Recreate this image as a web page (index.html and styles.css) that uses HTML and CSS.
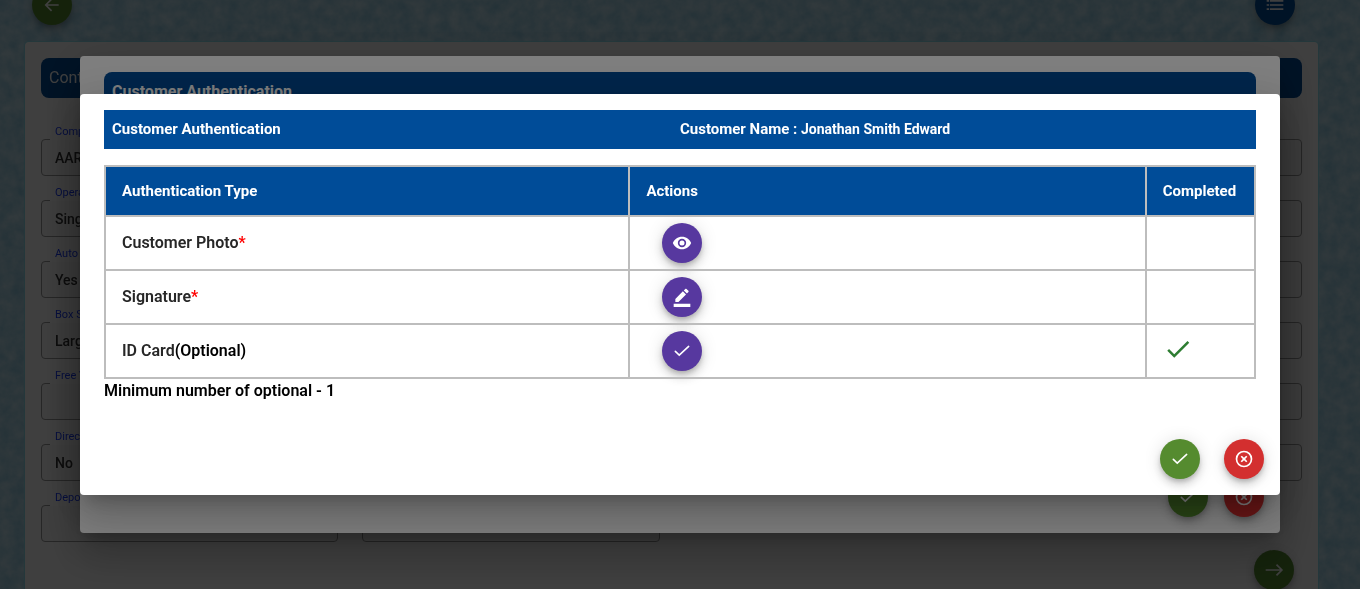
FILE: index.html
```
<!DOCTYPE html>
<html lang="en">
<head>
<meta charset="utf-8">
<title>Customer Authentication</title>
<link rel="stylesheet" href="styles.css">
</head>
<body>
<svg class="symbols" aria-hidden="true">
  <symbol id="check" viewBox="0 0 24 24"><path d="M4 12.500 8.700 17 20 6.500" fill="none" stroke="currentColor" stroke-width="1.900" stroke-linecap="round"/></symbol>
  <symbol id="done" viewBox="0 0 24 24"><path d="M9 16.17 4.83 12l-1.42 1.41L9 19 21 7l-1.41-1.41z" fill="currentColor"/></symbol>
  <symbol id="close" viewBox="0 0 24 24"><path d="M14.59 8 12 10.59 9.41 8 8 9.41 10.59 12 8 14.59 9.41 16 12 13.41 14.59 16 16 14.59 13.41 12 16 9.41zM12 2a10 10 0 1 0 0 20 10 10 0 0 0 0-20zm0 18a8 8 0 1 1 0-16 8 8 0 0 1 0 16z" fill="currentColor"/></symbol>
  <symbol id="eye" viewBox="0 0 24 24"><path d="M12 4.5C7 4.5 2.73 7.61 1 12c1.73 4.39 6 7.5 11 7.5s9.27-3.11 11-7.5c-1.73-4.39-6-7.5-11-7.5zM12 17a5 5 0 1 1 0-10 5 5 0 0 1 0 10zm0-8a3 3 0 1 0 0 6 3 3 0 0 0 0-6z" fill="currentColor"/></symbol>
  <symbol id="pen" viewBox="0 0 24 24"><path d="M22 24H2v-4h20v4zM13.06 5.19l3.75 3.75L7.75 18H4v-3.75l9.06-9.06zm4.82 2.68-3.75-3.75 1.83-1.83c.39-.39 1.02-.39 1.41 0l2.34 2.34c.39.39.39 1.02 0 1.41l-1.83 1.83z" fill="currentColor"/></symbol>
  <symbol id="back" viewBox="0 0 24 24"><path d="M20 12H5M11.5 5 4.5 12l7 7" fill="none" stroke="currentColor" stroke-width="2"/></symbol>
  <symbol id="next" viewBox="0 0 24 24"><path d="M2 12h19M15 5.5l6.500 6.500-6.500 6.500" fill="none" stroke="currentColor" stroke-width="2"/></symbol>
  <symbol id="list" viewBox="0 0 24 24"><path d="M2 7h3M2 12h3M2 17h3M6 7h16M6 12h16M6 17h16" fill="none" stroke="currentColor" stroke-width="2"/></symbol>
</svg>
<svg class="texture" aria-hidden="true">
  <filter id="paper" x="0" y="0" width="100%" height="100%">
    <feTurbulence type="fractalNoise" baseFrequency="0.08" numOctaves="5" seed="4"/>
    <feColorMatrix values="0 0 0 0 0.1  0 0 0 0 0.4  0 0 0 0 0.6  0.7 0 0 0 -0.15"/>
  </filter>
  <rect width="100%" height="100%" filter="url(#paper)"/>
</svg>

<div class="page">
  <nav class="toolbar">
    <button class="fab green" aria-label="Back"><svg><use href="#back"/></svg></button>
    <button class="fab navy" aria-label="List"><svg><use href="#list"/></svg></button>
  </nav>
  <main class="card">
    <h1 class="card-title">Contract</h1>
    <form class="fields">
      <div class="field"><label for="f1">Company</label><input id="f1" value="AARON" readonly></div>
      <div class="field"><input aria-label="Field 2" readonly></div>
      <div class="field"><input aria-label="Field 3" readonly></div>
      <div class="field"><input aria-label="Field 4" readonly></div>
      <div class="field"><label for="f2">Operation</label><input id="f2" value="Single" readonly></div>
      <div class="field"><input aria-label="Field 6" readonly></div>
      <div class="field"><input aria-label="Field 7" readonly></div>
      <div class="field"><input aria-label="Field 8" readonly></div>
      <div class="field"><label for="f3">Auto Renewal</label><input id="f3" value="Yes" readonly></div>
      <div class="field"><input aria-label="Field 10" readonly></div>
      <div class="field"><input aria-label="Field 11" readonly></div>
      <div class="field"><input aria-label="Field 12" readonly></div>
      <div class="field"><label for="f4">Box Size</label><input id="f4" value="Large" readonly></div>
      <div class="field"><input aria-label="Field 14" readonly></div>
      <div class="field"><input aria-label="Field 15" readonly></div>
      <div class="field"><input aria-label="Field 16" readonly></div>
      <div class="field"><label for="f5">Free Visits</label><input id="f5" readonly></div>
      <div class="field"><input aria-label="Field 18" readonly></div>
      <div class="field"><input aria-label="Field 19" readonly></div>
      <div class="field"><input aria-label="Field 20" readonly></div>
      <div class="field"><label for="f6">Direct Debit</label><input id="f6" value="No" readonly></div>
      <div class="field"><input aria-label="Field 22" readonly></div>
      <div class="field"><input aria-label="Field 23" readonly></div>
      <div class="field"><input aria-label="Field 24" readonly></div>
      <div class="field"><label for="f7">Deposit</label><input id="f7" readonly></div>
      <div class="field"><input aria-label="Field 26" readonly></div>
    </form>
    <div class="card-actions">
      <button class="fab green" aria-label="Next"><svg><use href="#next"/></svg></button>
    </div>
  </main>
</div>

<div class="overlay">
  <section class="dialog" aria-label="Customer Authentication">
    <h2 class="bar rounded">Customer Authentication</h2>
    <div class="dialog-body"></div>
    <div class="actions tight">
      <button class="fab green" aria-label="Confirm"><svg><use href="#check"/></svg></button>
      <button class="fab red" aria-label="Close"><svg><use href="#close"/></svg></button>
    </div>
  </section>
</div>

<div class="overlay">
  <section class="dialog" role="dialog" aria-modal="true" aria-labelledby="title">
    <header class="bar split">
      <h2 id="title">Customer Authentication</h2>
      <p>Customer Name : <span class="name">Jonathan Smith Edward</span></p>
    </header>
    <table class="auth">
      <colgroup><col class="c-type"><col class="c-actions"><col></colgroup>
      <thead>
        <tr><th scope="col">Authentication Type</th><th scope="col">Actions</th><th scope="col">Completed</th></tr>
      </thead>
      <tbody>
        <tr>
          <td>Customer Photo<span class="req">*</span></td>
          <td><button class="fab purple" aria-label="View photo"><svg><use href="#eye"/></svg></button></td>
          <td></td>
        </tr>
        <tr>
          <td>Signature<span class="req">*</span></td>
          <td><button class="fab purple" aria-label="Edit signature"><svg><use href="#pen"/></svg></button></td>
          <td></td>
        </tr>
        <tr>
          <td>ID Card<span class="opt">(Optional)</span></td>
          <td><button class="fab purple" aria-label="Check ID card"><svg><use href="#check"/></svg></button></td>
          <td><svg class="done" role="img" aria-label="Completed"><use href="#done"/></svg></td>
        </tr>
      </tbody>
    </table>
    <p class="note">Minimum number of optional - 1</p>
    <div class="actions">
      <button class="fab green" aria-label="Submit"><svg><use href="#check"/></svg></button>
      <button class="fab red" aria-label="Cancel"><svg><use href="#close"/></svg></button>
    </div>
  </section>
</div>
</body>
</html>
```
FILE: styles.css
```
* { box-sizing: border-box; }

body {
  margin: 0;
  height: 100vh;
  overflow: hidden;
  background: #c4e4f0;
  font: 400 16px/24px Roboto, "Liberation Sans", sans-serif;
  color: #000;
}

h1, h2, p { margin: 0; }

.symbols { position: absolute; width: 0; height: 0; }

.texture { position: fixed; inset: 0; width: 100%; height: 100%; }

.page {
  position: relative;
  margin-top: -15px;
  padding: 0 42px 0 25px;
}

.toolbar {
  display: flex;
  justify-content: space-between;
  padding: 0 23px 17px 7px;
}

.card {
  min-height: 547px;
  padding: 16px;
  background: #fff;
  border-radius: 4px;
  box-shadow: 0 0 1px 1px #8fe0ee;
}

.card-title {
  padding: 8px;
  border-radius: 8px;
  background: #004c98;
  color: #fff;
  font: 400 16px/24px Roboto, "Liberation Sans", sans-serif;
}

.fields {
  display: grid;
  grid-template-columns: repeat(4, 1fr);
  gap: 10px 24px;
  padding-top: 27px;
}

.field {
  position: relative;
  display: flex;
  flex-direction: column;
  justify-content: flex-end;
  height: 51px;
}

.field label {
  padding-left: 14px;
  font-size: 11px;
  line-height: 14px;
  color: #1a3cff;
}

/* opens the outline under the floating label */
.field label::after {
  content: "";
  position: absolute;
  top: 14px;
  left: 9px;
  width: 70px;
  height: 1px;
  background: #fff;
}

.field input {
  width: 100%;
  height: 37px;
  padding: 0 13px;
  border: 1px solid #999;
  border-radius: 4px;
  background: #fafafa;
  font: 500 14px/20px Roboto, "Liberation Sans", sans-serif;
  color: #333;
}

.card-actions {
  display: flex;
  justify-content: flex-end;
  padding: 8px;
}

.fab {
  display: flex;
  align-items: center;
  justify-content: center;
  width: 40px;
  height: 40px;
  padding: 0;
  border: 0;
  border-radius: 50%;
  color: #fff;
  box-shadow: 0 3px 5px -1px rgba(0, 0, 0, .2), 0 6px 10px rgba(0, 0, 0, .14), 0 1px 18px rgba(0, 0, 0, .12);
}

.fab svg { width: 20px; height: 20px; }

.green { background: #558b2f; }
.navy { background: #004c98; }
.red { background: #d32f2f; }
.purple { background: #57389f; }

.overlay {
  position: fixed;
  inset: 0;
  display: flex;
  align-items: center;
  justify-content: center;
  padding: 32px;
  background: rgba(0, 0, 0, .5);
}

.dialog {
  width: 100%;
  max-width: 1200px;
  padding: 16px 16px 16px 24px;
  border-radius: 4px;
  background: #fff;
  box-shadow: 0 11px 15px -7px rgba(0, 0, 0, .2), 0 24px 38px 3px rgba(0, 0, 0, .14), 0 9px 46px 8px rgba(0, 0, 0, .12);
}

.bar {
  margin-right: 8px;
  padding: 7px 8px;
  background: #004c98;
  color: #fff;
  font-size: 16px;
  font-weight: 700;
}

.rounded {
  padding: 8px;
  border-radius: 8px 8px 0 0;
}

.dialog-body { height: 365px; }

.split {
  display: grid;
  grid-template-columns: 1fr 1fr;
  padding: 7px 0 8px;
  font-size: 15px;
}

.split h2 {
  padding-left: 8px;
  font-size: 15px;
}

.name { font-size: 14px; }

.auth {
  width: calc(100% - 8px);
  margin-top: 16px;
  border-collapse: collapse;
  table-layout: fixed;
}

.c-type { width: 45.6%; }
.c-actions { width: 44.9%; }

.auth th, .auth td {
  padding: 6px 16px;
  border: 2px solid #bdbdbd;
  text-align: left;
}

.auth th {
  padding: 12px 16px;
  background: #004c98;
  color: #fff;
  font-size: 15px;
  font-weight: 700;
}

.auth td {
  height: 54px;
  color: #272727;
  font-weight: 600;
}

.auth .fab { margin-left: 16px; }

.req { color: #f00; }
.opt { color: #000; }

.auth td:has(.done) {
  padding-top: 4px;
  padding-bottom: 8px;
}

.done {
  display: block;
  width: 30px;
  height: 30px;
  color: #2e7d32;
}

.note { font-weight: 600; }

.actions {
  display: flex;
  justify-content: flex-end;
  gap: 24px;
  padding-top: 36px;
}

.tight {
  gap: 16px;
  padding-top: 0;
}
```
